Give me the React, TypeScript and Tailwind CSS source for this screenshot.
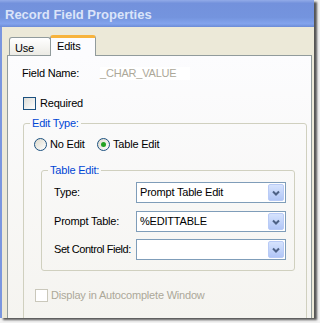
import type { ReactNode } from 'react';

// XP style bits
function Checkbox({ disabled = false }: { disabled?: boolean }) {
    return (
        <span
            className={
                disabled
                    ? 'block shrink-0 w-[13px] h-[13px] border border-[#cac8bb] bg-white'
                    : 'block shrink-0 w-[13px] h-[13px] border border-[#1c5180] bg-gradient-to-br from-[#dcdcd7] to-white'
            }
        />
    );
}

function Radio({ checked = false }: { checked?: boolean }) {
    return (
        <span className="flex shrink-0 items-center justify-center w-[13px] h-[13px] rounded-full border border-[#1c5180] bg-gradient-to-br from-[#dcd9cc] to-white">
            {checked && <span className="block w-[5px] h-[5px] rounded-full bg-[#21a121]" />}
        </span>
    );
}

function Combo({ value }: { value: string }) {
    return (
        <div className="flex shrink-0 items-center w-[150px] h-[21px] border border-[#7f9db9] bg-white">
            <span className="flex-1 pl-[3px] text-black truncate">{value}</span>
            <span className="flex items-center justify-center w-[16px] h-[17px] mr-px rounded-[2px] border border-[#b9cbf6] bg-gradient-to-b from-[#d6e3fd] to-[#b1c6f6]">
                <svg width="8" height="6" viewBox="0 0 8 6">
                    <path d="M1 1.5 L4 4.5 L7 1.5" fill="none" stroke="#4d6185" strokeWidth="2" />
                </svg>
            </span>
        </div>
    );
}

function GroupBox({ title, className, children }: { title: string; className: string; children: ReactNode }) {
    return (
        <fieldset className={`border border-[#d0d0bf] rounded-[3px] ${className}`}>
            <legend className="ml-[6px] px-[2px] leading-[13px] text-[#0046d5]">{title}</legend>
            {children}
        </fieldset>
    );
}

export default function App() {
    const rows = [
        { label: 'Type:', value: 'Prompt Table Edit', mt: 'mt-[5px]', tight: false },
        { label: 'Prompt Table:', value: '%EDITTABLE', mt: 'mt-[8px]', tight: false },
        { label: 'Set Control Field:', value: '', mt: 'mt-[7px]', tight: true },
    ];

    return (
        <div className="w-[320px] h-[323px] bg-[#f2f2f2] overflow-hidden font-['Liberation_Sans',Arial,sans-serif] text-[11px] leading-[13px] tracking-[-0.2px] text-black whitespace-nowrap">
            <div className="w-[314px] h-[318px] flex flex-col shadow-[3px_2px_2px_rgba(0,0,0,0.65)]">
                {/* Title bar */}
                <div className="h-[27px] shrink-0 flex items-center px-[5px] pt-[2px] bg-[linear-gradient(to_bottom,#92abe8_0%,#7391dc_12%,#7494de_65%,#82a3ed_88%,#6b8bd6_100%)]">
                    <span className="font-bold text-[13px] text-[#dbe4f9] tracking-[0px]">Record Field Properties</span>
                </div>

                {/* Body */}
                <div className="flex-1 min-h-0 overflow-hidden bg-[#ece9d8] border-l-2 border-[#7a96df] pl-[5px] pt-[8px]">
                    {/* Tabs */}
                    <div className="flex items-end ml-[2px] h-[20px]">
                        <div className="w-[42px] h-[18px] rounded-t-[3px] border border-b-0 border-[#919b9c] bg-gradient-to-b from-white to-[#ecebe5] pl-[5px] pt-[4px]">
                            Use
                        </div>
                        <div className="relative z-10 -ml-px w-[46px] h-[21px] -mb-px rounded-t-[3px] border-x border-[#919b9c] border-t-[3px] border-t-[#f7b33c] bg-[#fcfcfe] pl-[6px] pt-[2px]">
                            Edits
                        </div>
                    </div>

                    {/* Panel */}
                    <div className="w-[305px] h-[300px] border border-[#919b9c] bg-gradient-to-b from-[#fcfcfe] to-[#f4f3ee]">
                        <div className="flex items-center mt-[11px] pl-[14px]">
                            <span className="w-[78px]">Field Name:</span>
                            <span className="w-[90px] bg-white text-[#aca899]">_CHAR_VALUE</span>
                        </div>

                        <div className="flex items-center gap-[4px] mt-[17px] pl-[15px]">
                            <Checkbox />
                            <span>Required</span>
                        </div>

                        <GroupBox title="Edit Type:" className="ml-[15px] mt-[7px] w-[284px] h-[220px]">
                            <div className="flex items-center mt-[8px] pl-[10px]">
                                <Radio />
                                <span className="ml-[3px] w-[47px]">No Edit</span>
                                <Radio checked />
                                <span className="ml-[3px]">Table Edit</span>
                            </div>

                            <GroupBox title="Table Edit:" className="ml-[17px] mt-[13px] w-[254px] pb-[10px]">
                                {rows.map(r => (
                                    <div key={r.label} className={`flex items-center pl-[12px] ${r.mt}`}>
                                        <span className={r.tight ? 'w-[82px] shrink-0 tracking-[-0.45px]' : 'w-[82px] shrink-0'}>{r.label}</span>
                                        <Combo value={r.value} />
                                    </div>
                                ))}
                            </GroupBox>

                            <div className="flex items-center gap-[3px] mt-[18px] pl-[11px]">
                                <Checkbox disabled />
                                <span className="text-[#aca899]">Display in Autocomplete Window</span>
                            </div>
                        </GroupBox>
                    </div>
                </div>
            </div>
        </div>
    );
}
